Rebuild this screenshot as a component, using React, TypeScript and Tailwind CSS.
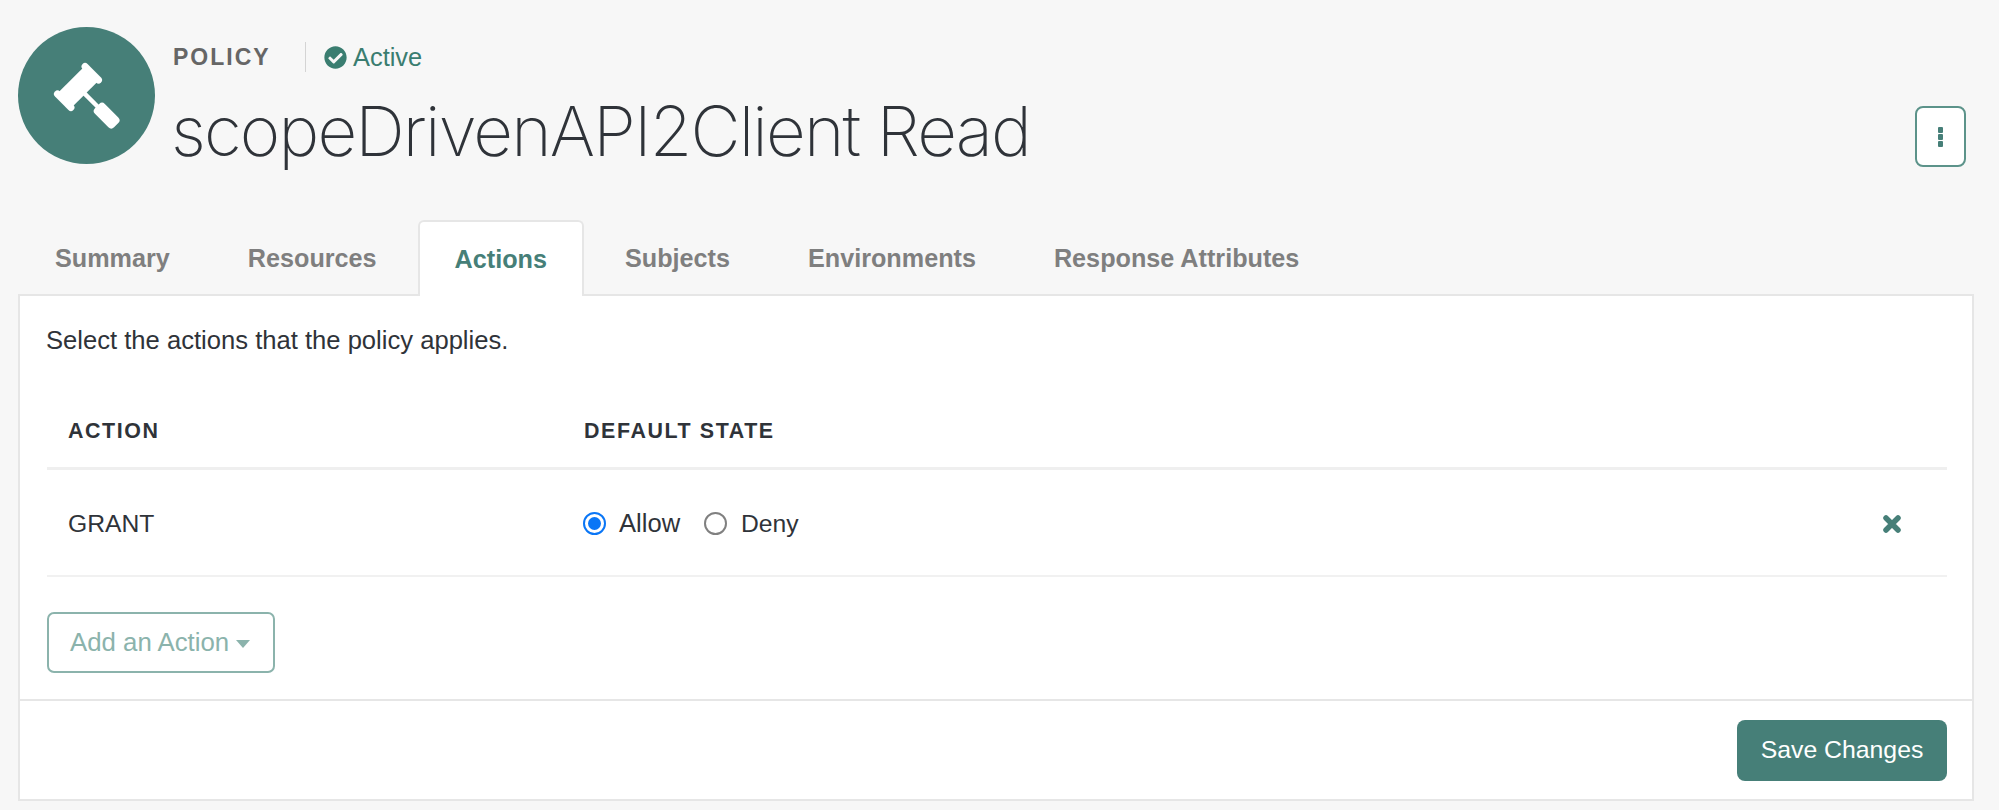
import { FaCheckCircle } from "react-icons/fa";

const tabs = ["Summary", "Resources", "Actions", "Subjects", "Environments", "Response Attributes"];

function Gavel() {
  return (
    <svg width="137" height="137" viewBox="0 0 137 137" className="block">
      <circle cx="68.5" cy="68.5" r="68.5" fill="#467f78" />
      <g transform="translate(60 60) rotate(45)" fill="#fff">
        <rect x="-10" y="-19" width="20" height="38" />
        <rect x="-13" y="-23" width="26" height="7" rx="3.5" />
        <rect x="-13" y="16" width="26" height="7" rx="3.5" />
        <rect x="9" y="-2.2" width="20" height="4.4" />
        <rect x="27" y="-7" width="27" height="14" rx="4" />
      </g>
    </svg>
  );
}

function Radio({ on }: { on?: boolean }) {
  return (
    <span
      className={
        on
          ? "flex h-[23px] w-[23px] items-center justify-center rounded-full border-2 border-[#0a76f6] bg-white"
          : "flex h-[23px] w-[23px] items-center justify-center rounded-full border-2 border-[#808080] bg-white"
      }
    >
      {on && <span className="h-[13px] w-[13px] rounded-full bg-[#0a76f6]" />}
    </span>
  );
}

export default function App() {
  return (
    <div className="h-[810px] w-[1999px] overflow-hidden bg-[#f7f7f7] pl-[18px] pr-[25px] pt-[27px] font-['Liberation_Sans',sans-serif] text-[#2f3339]">
      <header className="flex h-[193px] items-start">
        <Gavel />
        <div className="ml-[18px] min-w-0 flex-1">
          <div className="mt-[11px] flex h-[38px] items-center">
            <span className="w-[132px] text-[23px] font-bold tracking-[2px] text-[#666]">POLICY</span>
            <span className="h-[30px] w-px bg-[#d4d4d4]" />
            <FaCheckCircle className="ml-[18px] text-[23px] text-[#3a7d70]" />
            <span className="ml-[6px] text-[25.4px] text-[#3a7d70]">Active</span>
          </div>
          <h1 className="-ml-[2px] mt-[13px] font-['Inter',sans-serif] text-[69px] font-extralight leading-[84px] tracking-[-1.85px] text-[#2f3339]">
            scopeDrivenAPI2Client Read
          </h1>
        </div>
        <button className="mr-[8px] mt-[79px] flex h-[61px] w-[51px] flex-col items-center justify-center gap-[1px] rounded-[8px] border-2 border-[#5c938a] bg-white">
          <span className="h-[6px] w-[5px] rounded-[1px] bg-[#467f78]" />
          <span className="h-[6px] w-[5px] rounded-[1px] bg-[#467f78]" />
          <span className="h-[6px] w-[5px] rounded-[1px] bg-[#467f78]" />
        </button>
      </header>

      <nav className="relative z-10 flex h-[74px]">
        {tabs.map((t) =>
          t === "Actions" ? (
            <div
              key={t}
              className="mr-[4px] flex h-[76px] items-center rounded-t-[6px] border-2 border-b-0 border-[#e6e6e6] bg-white px-[35px] pt-[2px] text-[25.2px] font-bold text-[#467f78]"
            >
              {t}
            </div>
          ) : (
            <div key={t} className="mr-[4px] flex h-[74px] items-center px-[37px] pt-[3px] text-[25.2px] font-bold text-[#7f7f7f]">
              {t}
            </div>
          )
        )}
      </nav>

      <main className="flex h-[507px] flex-col border-2 border-[#e6e6e6] bg-white">
        <div className="flex-1 pl-[27px] pr-[25px] pt-[29px]">
          <p className="-ml-[1px] text-[25.6px] leading-[30px]">Select the actions that the policy applies.</p>
          <div className="mt-[40px] flex h-[75px] items-center border-b-[3px] border-[#efefef] pl-[21px] text-[21.4px] font-bold tracking-[1.6px]">
            <span className="w-[516px]">ACTION</span>
            <span>DEFAULT STATE</span>
          </div>
          <div className="flex h-[107px] items-center border-b-2 border-[#f1f1f1] pl-[21px] pr-[46px] pt-[2px] text-[24.7px]">
            <span className="w-[515px]">GRANT</span>
            <Radio on />
            <span className="ml-[13px] w-[85px] text-[25.6px]">Allow</span>
            <Radio />
            <span className="ml-[14px]">Deny</span>
            <svg width="18" height="18" viewBox="0 0 18 18" className="ml-auto">
              <path d="M3 3 15 15M15 3 3 15" stroke="#467f78" strokeWidth="5.5" strokeLinecap="round" />
            </svg>
          </div>
          <button className="mt-[35px] flex h-[61px] w-[228px] items-center rounded-[7px] border-2 border-[#8bb3ac] bg-white pl-[21px] text-[25.8px] text-[#8bb3ac]">
            Add an Action
            <svg width="14" height="8" viewBox="0 0 14 8" className="ml-[7px] mt-[3px]">
              <path d="M0 0H14L7 8Z" fill="#8bb3ac" />
            </svg>
          </button>
        </div>
        <footer className="flex h-[100px] items-center justify-end border-t-2 border-[#e6e6e6] pr-[25px]">
          <button className="h-[61px] w-[210px] rounded-[8px] bg-[#467f78] text-[24.8px] text-white">Save Changes</button>
        </footer>
      </main>
    </div>
  );
}
